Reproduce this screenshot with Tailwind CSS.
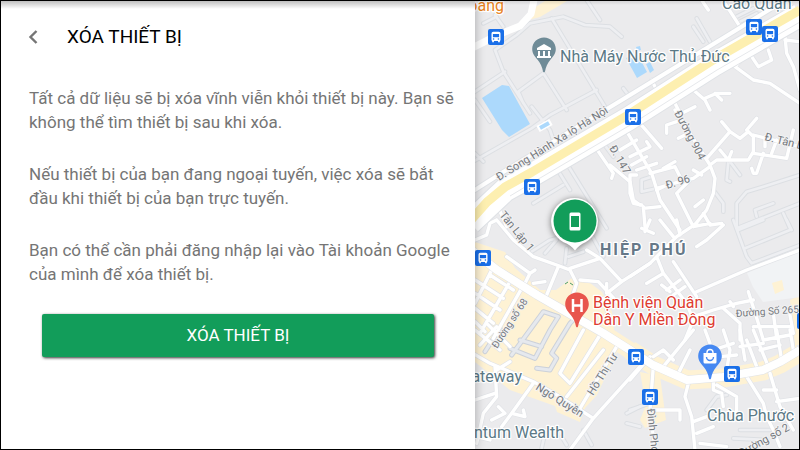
<!DOCTYPE html>
<html lang="vi">
<head>
    <meta charset="UTF-8">
    <meta name="viewport" content="width=device-width, initial-scale=1.0">
    <title>Xóa thiết bị</title>
    <script src="https://cdn.jsdelivr.net/npm/@tailwindcss/browser@4"></script>
</head>
<body class="font-[Roboto,'Noto_Sans',sans-serif]">

    <div class="grid h-screen grid-cols-[474fr_324fr] overflow-hidden border border-black bg-white">

        <!-- Erase panel -->
        <main class="relative z-10 bg-white shadow-[0_0_10px_rgba(0,0,0,0.3)]">
            <div class="absolute inset-x-0 top-0 h-2 bg-linear-to-b from-black/25 to-transparent"></div>

            <header class="flex items-center gap-[26px] px-6 pt-5">
                <button type="button" aria-label="Quay lại" class="flex h-8 w-4 items-center justify-center text-[#757575]">
                    <svg class="h-4 w-3" viewBox="0 0 12 16" fill="none" stroke="currentColor" stroke-width="2.4"><path d="M9.500 2 3.500 8l6 6"/></svg>
                </button>
                <h1 class="text-[19px] leading-7 text-black">XÓA THIẾT BỊ</h1>
            </header>

            <div class="mt-[33px] space-y-7 pr-4 pl-7 text-[17px] leading-6 text-[#757575]">
                <p>Tất cả dữ liệu sẽ bị xóa vĩnh viễn khỏi thiết bị này. Bạn sẽ không thể tìm thiết bị sau khi xóa.</p>
                <p>Nếu thiết bị của bạn đang ngoại tuyến, việc xóa sẽ bắt đầu khi thiết bị của bạn trực tuyến.</p>
                <p>Bạn có thể cần phải đăng nhập lại vào Tài khoản Google của mình để xóa thiết bị.</p>
            </div>

            <div class="mt-7 px-[41px]">
                <button type="submit" class="h-[43px] w-full rounded-xs bg-[#129d5a] text-[17px] text-white shadow-[1px_1px_3px_rgba(0,0,0,0.8)]">XÓA THIẾT BỊ</button>
            </div>
        </main>

        <!-- Map -->
        <section aria-label="Bản đồ" class="relative overflow-hidden bg-[#ebebed]">
            <svg class="block size-full" viewBox="475 1 324 448" preserveAspectRatio="xMidYMid slice">
                <defs>
                    <g id="lanes" fill="none" stroke-linejoin="round" stroke-linecap="round" transform="scale(.33333)">
                        <path transform="translate(1410 0)" d="M75 150 140 105 180 70 280 50 345 75 420 80 455 110M350 0 390 60M245 55 405 320M75 150 100 215 180 340M0 285 105 215M145 275 220 220 290 330M145 275 160 310M40 70 80 50M75 45 100 80M15 300 60 365M460 265 475 285"/>
                        <path transform="translate(1410 330)" d="M0 160 185 55 240 15 380 -60M15 130 40 155M185 -10 240 60 250 90M290 160 410 355M260 175 300 240M190 280 280 225M385 80 430 140"/>
                        <path transform="translate(1890 0)" d="M200 55 240 125M190 80 220 125M320 50 370 25M330 65 380 40"/>
                        <path transform="translate(1890 330)" d="M295 155 290 210 300 215M300 155 330 195M250 240 280 280 280 305M320 355 320 280 350 245 400 230 510 195M320 355 510 280M380 320 375 300 430 280M460 310 480 355M80 235 35 245 35 210 65 200"/>
                        <path transform="translate(1890 660)" d="M310 0 350 110 365 130 510 75M325 30 400 0M345 85 480 30M470 0 485 30"/>
                        <path transform="translate(1410 660)" d="M185 95 240 60 260 55M225 100 260 60M285 130 290 85M340 0 400 110M295 110 340 95"/>
                        <path transform="translate(1410 990)" d="M275 320 290 345M340 300 365 345M510 230 470 250M470 280 510 290M225 310 215 355"/>
                        <path transform="translate(1890 990)" d="M330 300 420 300M310 325 410 330M230 240 260 200 290 195M0 240 60 220"/>
                    </g>
                    <g id="blocks" fill="none" stroke-linejoin="round" stroke-linecap="round" transform="translate(470 330) scale(.33333)">
                        <path d="M120 55 195 85 240 0 265 -40 220 -55 125 75M150 30 215 50M200 115 240 120 260 85 245 70 300 -20 330 -50M90 -5 45 65"/>
                    </g>
                    <g id="streets" fill="none" stroke-linejoin="round" stroke-linecap="round" transform="scale(.33333)">
                        <path transform="translate(1890 0)" d="M215 0 235 30M285 10 330 80M400 110 315 200 370 240 420 250 510 310M365 170 385 200 425 180 415 150M450 90 465 110 470 160 490 200 510 270M465 120 510 125M125 290 150 340M150 280 190 270 225 300 240 330M225 295 260 280 300 280M145 345 195 320M255 280 275 300M65 240 75 260"/>
                        <path transform="translate(1890 330)" d="M135 0 240 165 255 205 250 250 230 300 190 350M30 40 95 115M240 165 260 150 355 150 370 125 370 80 350 60 380 25M230 145 300 65 275 35M300 65 330 85 355 65M370 75 510 110M370 130 470 145 490 60M400 130 380 190 370 190 365 175M405 80 405 110M440 90 425 130M270 120 295 150 305 125M240 170 190 205 150 215 80 235M190 180 215 195M60 190 135 170 150 200M100 175 135 155M180 210 140 250 190 350M220 270 195 290M40 290 45 350M40 295 90 290M0 195 0 250 10 280 35 285M0 140 60 110 50 95M20 195 0 195M20 180 80 160M140 35 110 45 110 70M145 85 165 75M220 310 240 345 275 340M190 350 240 340M80 240 100 230"/>
                        <path transform="translate(1410 330)" d="M375 110 430 190 425 205M420 165 480 215 490 270 510 285M465 55 545 190M545 190 570 270 630 360M450 120 500 90M485 165 530 140M80 280 110 350"/>
                        <path transform="translate(1410 660)" d="M80 0 130 60 190 110 260 135 300 150 320 190 310 220 330 270M15 60 50 45 60 10 80 0M110 110 180 160 195 150M180 160 165 190M265 140 230 225M190 190 225 185M300 145 390 115 455 185 540 130M350 90 390 115M330 180 385 185 455 260M410 220 455 185M410 220 410 190M65 150 15 250M120 185 30 340M155 205 70 355M15 180 100 235M15 220 90 270M15 265 70 310M15 305 45 335M60 165 130 210M400 235 420 300"/>
                        <path transform="translate(1410 990)" d="M0 65 60 100 190 155 260 195 370 265 510 110M370 265 300 360M340 0 270 130 300 160 390 15M440 50 330 235M400 60 290 200M15 0 90 60M50 -20 120 50M30 45 80 -10M75 110 80 200 40 250 20 340M80 120 120 95M190 160 125 250 165 260 160 240M85 230 105 250 65 270M125 250 95 290M15 210 75 190M20 320 60 330"/>
                        <path transform="translate(1890 660)" d="M0 170 60 130 100 90 140 50 200 10M130 50 90 0M60 0 45 35M150 45 140 0M35 25 70 40M80 110 100 160 50 190M100 160 170 250 190 300M130 125 200 230M110 210 150 180M130 225 165 200M95 195 120 215M200 215 350 150 510 90M280 15 230 60 200 80M190 290 250 270 320 250 370 240M280 265 330 310 330 360M355 215 385 310 400 360M370 320 480 320M430 280 440 355M480 285 490 340M300 245 310 260M190 300 165 360"/>
                        <path transform="translate(1890 990)" d="M0 150 60 80M190 0 100 110M70 80 100 60 130 90M140 140 180 60M175 160 165 200 185 260 195 360M70 110 60 240 75 360M250 150 250 180 275 190 280 230M260 165 320 200 320 250M350 140 400 220 410 260 430 300 450 350M415 110 370 0M420 130 450 230 490 300M400 180 440 180M440 215 510 205M190 275 230 260M200 310 250 290M60 240 150 240 150 270M240 40 225 0M280 0 300 60 290 120M250 60 310 40M330 0 345 90M350 30 380 110M330 50 400 40M390 60 450 45M270 80 320 75M440 0 455 90M480 0 490 60M400 30 480 15M210 340 290 350"/>
                    </g>
                    <symbol id="bus" viewBox="0 0 16 16">
                        <rect width="16" height="16" rx="2" fill="#1a6fe8"/>
                        <path fill="#fff" d="M5.200 2.800h5.600q1.700 0 1.700 1.700v6.400q0 .7-.7 1v1.400h-1.700V12H5.900v1.300H4.200v-1.400q-.7-.3-.7-1V4.500q0-1.700 1.700-1.700z"/>
                        <path fill="#1a6fe8" d="M4.900 5h6.200v3.200H4.900z"/>
                        <circle cx="5.600" cy="10" r=".8" fill="#1a6fe8"/>
                        <circle cx="10.400" cy="10" r=".8" fill="#1a6fe8"/>
                    </symbol>
                    <symbol id="pin" viewBox="0 0 24 36">
                        <path d="M12 .5C5.500.5.200 5.500.200 12c0 4.800 2.800 7.600 5.600 10.900 2.600 3.200 4.400 7 5.200 11.500q1 1.800 2 0c.8-4.500 2.600-8.300 5.200-11.500 2.800-3.300 5.600-6.100 5.600-10.900C23.800 5.500 18.500.5 12 .5z"/>
                    </symbol>
                </defs>

                <!-- Land -->
                <path fill="#fef2d4" d="M528 20 540 17 567 1H545L534 8zM475 242 490 247 505 252 515 268 540 290 556 290 572 278 590 283 602 292 612 312 614 330 645 350 640 368 617 352 597 395 585 408 580 422 557 412 555 406 510 390 475 362zM790 300 799 296V345L795 345zM640 372 660 376 666 420 645 428 640 420 646 405z"/>
                <path fill="none" stroke="#fef2d4" stroke-width="19" d="M630 350 653 365 687 380 723 378 763 371 780 364 800 352"/>
                <path fill="#f1f3f5" d="M747 273 800 251V297L763 302 753 287z"/>
                <path fill="#fef2d4" d="M772 283 782 280 784 290 775 294z"/>
                <path fill="#acd9fc" d="M482 98 502 85 509 86 520 106 530 124 509 137 502 130zM626 58 637 53 647 72 637 78zM646 64 650 62 654 70 650 73zM636 47 640 46 641 50 637 51z"/>

                <!-- Roads -->
                <use href="#lanes" stroke="#dcdfe3" stroke-width="14"/>
                <use href="#lanes" stroke="#eeeff2" stroke-width="8"/>
                <use href="#blocks" stroke="#ccd1d9" stroke-width="15"/>
                <use href="#blocks" stroke="#e6e9ee" stroke-width="9"/>
                <use href="#streets" stroke="#e1e3e7" stroke-width="14"/>
                <use href="#streets" stroke="#fff" stroke-width="10"/>
                <g fill="none" stroke-linejoin="round">
                    <path stroke="#fff" stroke-width="7" d="M470 49 500 34 520 26 531 14 534 0"/>
                    <path stroke="#dfe2e6" stroke-width="9" d="M470 249 497 270 537 295 563 310 603 333 630 350 653 365 687 380 723 377 763 370 780 362 800 350"/>
                    <path stroke="#fff" stroke-width="8" d="M470 249 497 270 537 295 563 310 603 333 630 350 653 365 687 380 723 377 763 370 780 362 800 350"/>
                    <path stroke="#dfe2e6" stroke-width="6" d="M470 193 500 174 630 95 733 32 785 0"/>
                    <path stroke="#fff" stroke-width="4" d="M470 193 500 174 630 95 733 32 785 0"/>
                    <path stroke="#dfe2e6" stroke-width="25" d="M470 223 505 190 532 175 628 119 713 65 800 15"/>
                    <path stroke="#fff" stroke-width="23" d="M470 223 505 190 532 175 628 119 713 65 800 15"/>
                    <path stroke="#e6e8eb" stroke-width="1" d="M510 196 535 181 632 124 717 70 800 22"/>
                    <path stroke="#fdefb0" stroke-width="9" d="M470 221 487 202 505 187 532 172 628 115 713 60 800 10"/>
                    <path stroke="#fff" stroke-width="7" d="M538 129 551 122"/>
                    <path stroke="#acd9fc" stroke-width="4" d="M540 128 549 123"/>
                    <path stroke="#4c9c68" stroke-width="1" d="M565 284 568 282M570 283 573 285"/>
                </g>

                <!-- Labels -->
                <g fill="#74787d" stroke="#f3f3f4" stroke-width="2" paint-order="stroke" stroke-linejoin="round" font-size="11">
                    <text transform="translate(499 181) rotate(-32)">Đ. Song Hành Xa lộ Hà Nội</text>
                    <text transform="translate(674 113) rotate(62)">Đường 904</text>
                    <text transform="translate(609 148) rotate(60)">Đ. 147</text>
                    <text transform="translate(667 189) rotate(-17)">Đ. 96</text>
                    <text transform="translate(764 140) rotate(14)">Đ. Tân Lập</text>
                    <text transform="translate(499 215) rotate(51)">Tân Lập 1</text>
                    <text transform="translate(497 349) rotate(-57)" font-size="10">Đường số 68</text>
                    <text transform="translate(736 317) rotate(-4)" font-size="10">Đường Số 265</text>
                    <text transform="translate(535 389) rotate(32)" font-size="11">Ngô Quyền</text>
                    <text transform="translate(593 396) rotate(-58)">Hồ Thị Tư</text>
                    <text transform="translate(647 409) rotate(84)">Đình Phong Phú</text>
                    <text transform="translate(741 457) rotate(-29)">Đường số 2</text>
                </g>
                <g fill="#5b7986" stroke="#fff" stroke-width="2.500" paint-order="stroke" stroke-linejoin="round" font-size="16">
                    <text x="560" y="62">Nhà Máy Nước Thủ Đức</text>
                    <text x="722" y="9">Cao Quận</text>
                    <text x="522" y="382" text-anchor="end">Gateway</text>
                    <text x="564" y="438" text-anchor="end">Quantum Wealth</text>
                    <text x="707" y="421">Chùa Phước</text>
                    <text x="504" y="11" text-anchor="end" fill="#e8821e">Hoàng</text>
                    <text x="593" y="308" fill="#de3c31">Bệnh viện Quân</text>
                    <text x="593" y="325" fill="#de3c31">Dân Y Miền Đông</text>
                    <text x="600" y="255" fill="#667888" font-weight="700" letter-spacing="2">HIỆP PHÚ</text>
                </g>

                <!-- Bus stops -->
                <g>
                    <use href="#bus" x="488" y="29" width="16" height="16"/>
                    <use href="#bus" x="746" y="19" width="16" height="16"/>
                    <use href="#bus" x="762" y="26" width="16" height="16"/>
                    <use href="#bus" x="625" y="109" width="16" height="16"/>
                    <use href="#bus" x="524" y="179" width="16" height="16"/>
                    <use href="#bus" x="475" y="250" width="16" height="16"/>
                    <use href="#bus" x="797" y="313" width="16" height="16"/>
                    <use href="#bus" x="628" y="349" width="16" height="16"/>
                    <use href="#bus" x="724" y="366" width="16" height="16"/>
                    <use href="#bus" x="642" y="389" width="16" height="16"/>
                </g>

                <!-- Place pins -->
                <use href="#pin" x="532" y="37" width="24" height="36" fill="#6f8b97"/>
                <path fill="#fff" d="M544 44 551 48V50H537V48zM538 51h2v5h-2zM543 51h2v5h-2zM548 51h2v5h-2zM537 56h14v2h-14z"/>
                <use href="#pin" x="565" y="292" width="24" height="36" fill="#e8554d"/>
                <path fill="none" stroke="#fff" stroke-width="2.500" d="M573 299V312M581.500 299V312M573 305.500H581.500"/>
                <use href="#pin" x="698" y="344" width="24" height="36" fill="#4688f1"/>
                <path fill="#fff" d="M703.500 353h13v9q0 1.500-1.500 1.500h-10q-1.500 0-1.500-1.500z"/>
                <path fill="none" stroke="#fff" stroke-width="1.400" d="M707 354v-1.500a3 3 0 0 1 6 0V354"/>
                <path fill="none" stroke="#4688f1" stroke-width="1.400" d="M706.500 357a3.500 3.500 0 0 0 7 0"/>

                <!-- Device marker -->
                <g class="drop-shadow-[0_1px_3px_rgba(0,0,0,0.5)]">
                    <path fill="#fff" d="M574.500 198a23.500 23.500 0 0 1 11 44.200Q579 245 575 250.500 571 245 563.500 242.200A23.500 23.500 0 0 1 574.500 198z"/>
                </g>
                <circle cx="575" cy="221" r="21.500" fill="#129d5a"/>
                <path fill="#fff" fill-rule="evenodd" d="M571 212.500h8q1.500 0 1.500 1.500v15q0 1.500-1.500 1.500h-8q-1.500 0-1.500-1.500v-15q0-1.500 1.500-1.500zM571 216v11h8v-11z"/>
            </svg>
            <div class="absolute inset-x-0 top-0 h-1 bg-linear-to-b from-black/10 to-transparent"></div>
        </section>
    </div>

</body>
</html>
